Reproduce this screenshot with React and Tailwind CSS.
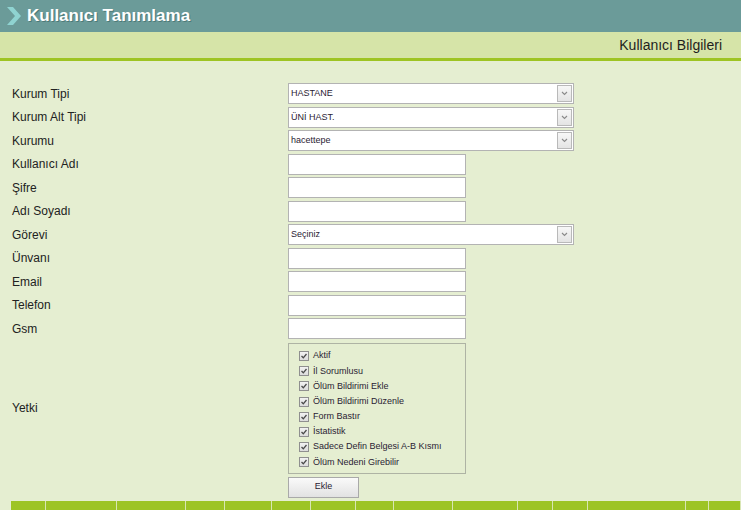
const font = { fontFamily: '"Liberation Sans", Arial, sans-serif' };

const rows = [
  { label: 'Kurum Tipi', type: 'select', value: 'HASTANE' },
  { label: 'Kurum Alt Tipi', type: 'select', value: 'ÜNİ HAST.' },
  { label: 'Kurumu', type: 'select', value: 'hacettepe' },
  { label: 'Kullanıcı Adı', type: 'input' },
  { label: 'Şifre', type: 'input' },
  { label: 'Adı Soyadı', type: 'input' },
  { label: 'Görevi', type: 'select', value: 'Seçiniz' },
  { label: 'Ünvanı', type: 'input' },
  { label: 'Email', type: 'input' },
  { label: 'Telefon', type: 'input' },
  { label: 'Gsm', type: 'input' },
];

const perms = [
  'Aktif',
  'İl Sorumlusu',
  'Ölüm Bildirimi Ekle',
  'Ölüm Bildirimi Düzenle',
  'Form Bastır',
  'İstatistik',
  'Sadece Defin Belgesi A-B Kısmı',
  'Ölüm Nedeni Girebilir',
];

const footerCells = [35, 71, 69, 39, 47, 39, 45, 38, 59, 65, 35, 35, 98, 23, 32];

function SelectBox({ value }) {
  return (
    <div className="relative w-[286px] h-[21px] bg-white border border-[#b3b3b3] flex items-center">
      <span className="pl-[2px] text-[9px] text-[#2a2233]">{value}</span>
      <div className="absolute right-[1px] top-[1px] bottom-[1px] w-[15px] bg-gradient-to-b from-[#f7f7f7] to-[#e4e4e4] border border-[#b9b9b9] flex items-center justify-center">
        <svg width="7" height="5" viewBox="0 0 7 5">
          <path d="M1 1 L3.5 3.5 L6 1" fill="none" stroke="#8a8a8a" strokeWidth="1.1" />
        </svg>
      </div>
    </div>
  );
}

function CheckIcon() {
  return (
    <div className="w-[10px] h-[10px] border border-[#8f8f8f] bg-gradient-to-b from-[#f2f2f2] to-[#dcdcdc] flex items-center justify-center">
      <svg width="8" height="8" viewBox="0 0 8 8">
        <path d="M1.5 4 L3.3 5.8 L6.5 2" fill="none" stroke="#4a4a4a" strokeWidth="1.3" />
      </svg>
    </div>
  );
}

export default function App() {
  return (
    <div className="w-full h-[510px] overflow-hidden bg-[#e5eed1]" style={font}>
      {/* title bar */}
      <div className="h-[32px] bg-[#6b9b99] flex items-center">
        <svg className="ml-[7px]" width="14" height="18" viewBox="0 0 14 18">
          <path d="M0 0 H6 L14 9 L6 18 H0 L8 9 Z" fill="#8fd3d1" />
        </svg>
        <span className="ml-[6px] text-[17px] font-bold text-white [text-shadow:1px_1px_0_#4d7a78]">Kullanıcı Tanımlama</span>
      </div>

      {/* sub header */}
      <div className="h-[26px] bg-[#d6e4a8] flex items-center justify-end pr-[19px]">
        <span className="text-[14px] text-[#1e1e1e]">Kullanıcı Bilgileri</span>
      </div>
      <div className="h-[3px] bg-[#9ec423]" />

      {/* form */}
      <div className="pt-[21px]">
        {rows.map((r) => (
          <div key={r.label} className="flex items-center h-[23.5px]">
            <div className="w-[288px] pl-[12px] text-[12px] text-[#222]">{r.label}</div>
            {r.type === 'select' ? (
              <SelectBox value={r.value} />
            ) : (
              <div className="w-[178px] h-[21px] bg-white border border-[#b3b3b3]" />
            )}
          </div>
        ))}

        <div className="flex items-center mt-[2px]">
          <div className="w-[288px] pl-[12px] text-[12px] text-[#222]">Yetki</div>
          <div className="w-[178px] h-[131px] border border-[#aeb3a4] pt-[5px] pl-[10px]">
            {perms.map((p) => (
              <div key={p} className="flex items-center gap-[4px] h-[15.2px]">
                <CheckIcon />
                <span className="text-[9px] text-[#2a2233]">{p}</span>
              </div>
            ))}
          </div>
        </div>

        <div className="ml-[288px] mt-[3px] w-[71px] h-[21px] border border-[#a9a9a9] bg-gradient-to-b from-[#fafafa] to-[#e2e2e2] flex items-center justify-center text-[9px] text-[#2a2233]">
          Ekle
        </div>

        {/* footer bar */}
        <div className="flex ml-[11px] mt-[3px] h-[10px]">
          {footerCells.map((w, i) => (
            <div key={i} className="h-full bg-[#9dc425] border-r border-[#d9e6b4]" style={{ width: w }} />
          ))}
        </div>
      </div>
    </div>
  );
}
